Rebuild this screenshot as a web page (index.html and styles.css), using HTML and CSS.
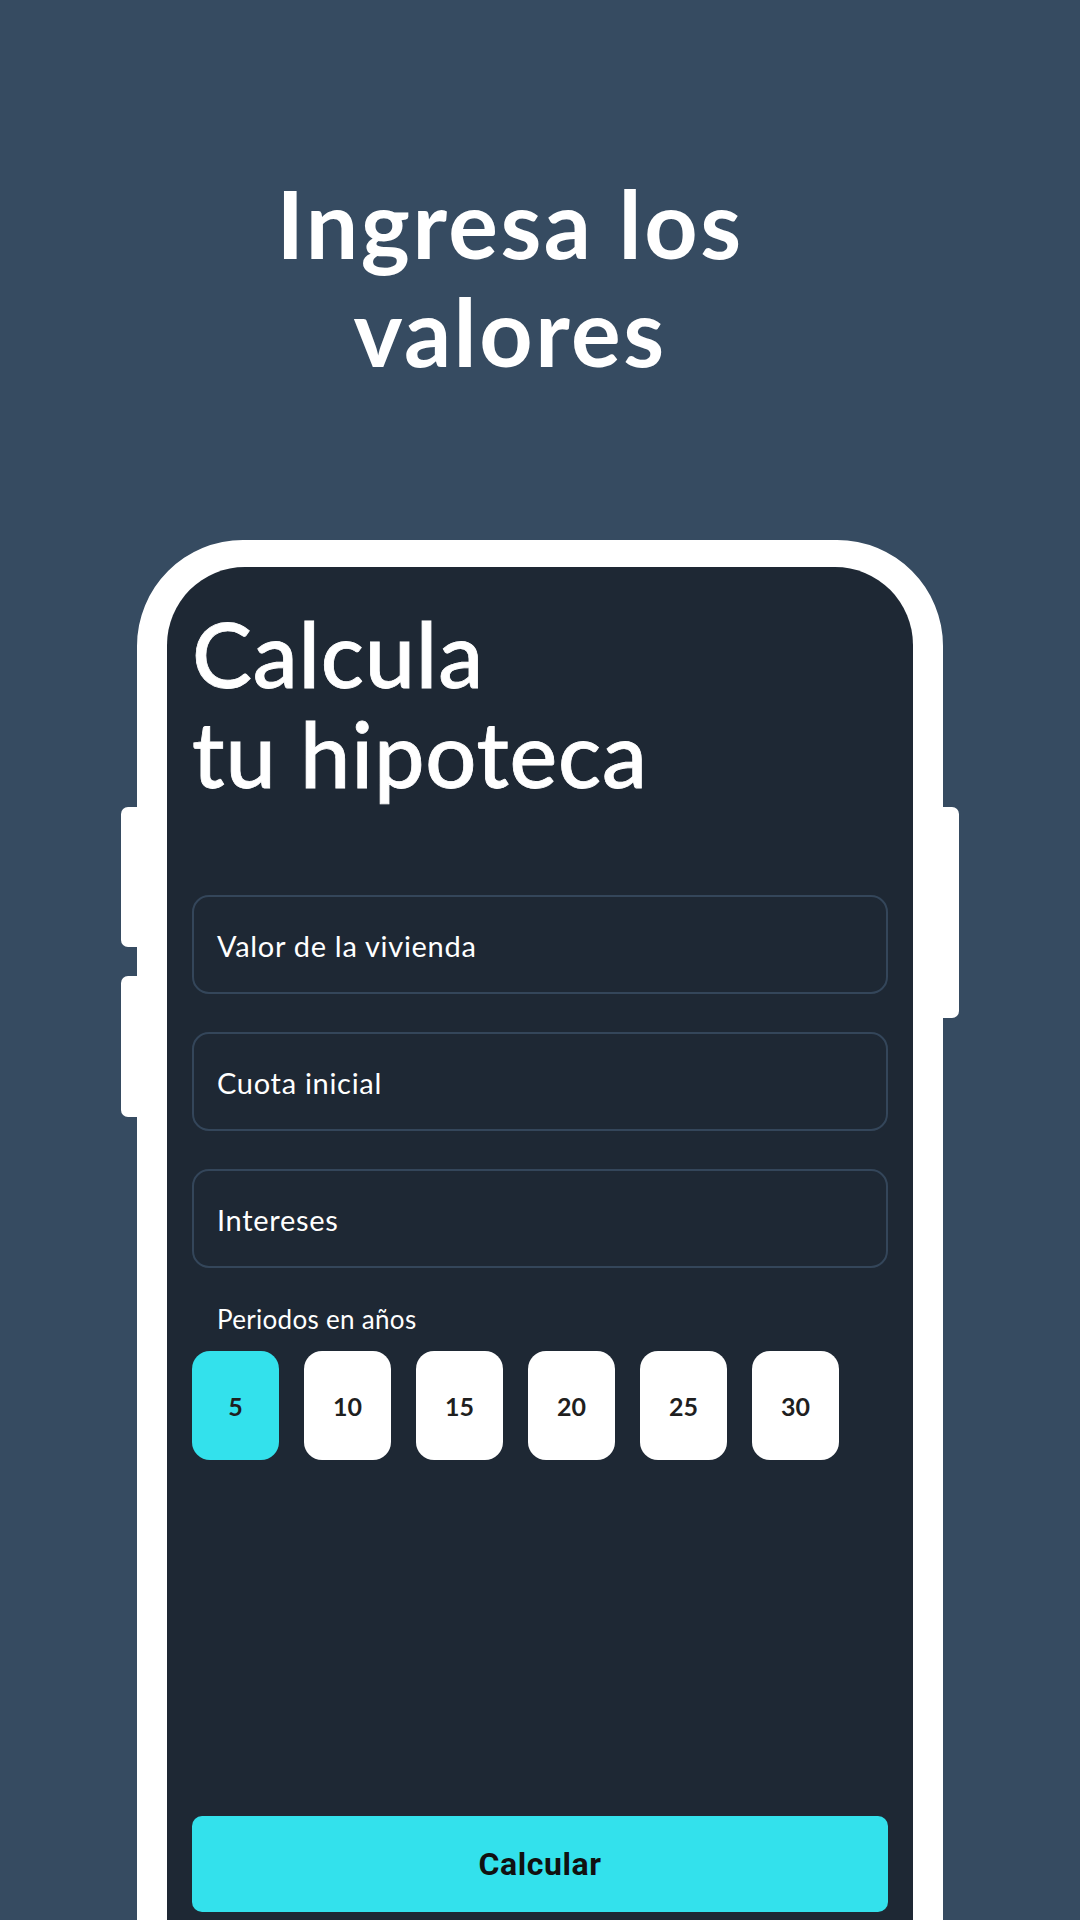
FILE: index.html
```html
<!DOCTYPE html>
<html lang="es">
<head>
<meta charset="utf-8">
<title>Calcula tu hipoteca</title>
<link rel="stylesheet" href="styles.css">
</head>
<body>
<div class="page">
  <h1 class="headline">Ingresa los<br>valores</h1>
  <div class="phone">
    <span class="side-btn left one"></span>
    <span class="side-btn left two"></span>
    <span class="side-btn right three"></span>
    <div class="screen">
      <h2 class="app-title">Calcula<br>tu hipoteca</h2>
      <div class="fields">
        <div class="field">Valor de la vivienda</div>
        <div class="field">Cuota inicial</div>
        <div class="field">Intereses</div>
      </div>
      <div class="periods-label">Periodos en años</div>
      <div class="chips">
        <div class="chip active">5</div>
        <div class="chip">10</div>
        <div class="chip">15</div>
        <div class="chip">20</div>
        <div class="chip">25</div>
        <div class="chip">30</div>
      </div>
      <div class="calc-btn">Calcular</div>
    </div>
  </div>
</div>
</body>
</html>
```

FILE: styles.css
```css
* { box-sizing: border-box; }
html, body {
  margin: 0;
  padding: 0;
}
body {
  width: 1080px;
  height: 1920px;
  overflow: hidden;
  background: #364b61;
  font-family: "Lato", "Liberation Sans", sans-serif;
}
.page {
  width: 1080px;
  height: 1920px;
  display: flex;
  flex-direction: column;
  align-items: center;
}
.headline {
  margin: 169px 60px 0 0;
  color: #ffffff;
  font-size: 93px;
  line-height: 108px;
  font-weight: 700;
  text-align: center;
  letter-spacing: 2.5px;
}
.phone {
  position: relative;
  margin-top: 155px;
  width: 806px;
  height: 1500px;
  border: 30px solid #ffffff;
  border-top-width: 27px;
  border-radius: 106px 106px 0 0;
  background: #ffffff;
  flex-shrink: 0;
}
.side-btn {
  position: absolute;
  background: #ffffff;
  width: 16px;
}
.side-btn.left { left: -46px; border-radius: 7px 0 0 7px; }
.side-btn.right { right: -46px; border-radius: 0 7px 7px 0; }
.side-btn.one { top: 240px; height: 140px; }
.side-btn.two { top: 409px; height: 141px; }
.side-btn.three { top: 240px; height: 211px; }
.screen {
  height: 100%;
  background: #1e2834;
  border-radius: 78px 78px 0 0;
  padding: 36px 25px 0 25px;
  display: flex;
  flex-direction: column;
}
.app-title {
  margin: 0;
  color: #ffffff;
  font-size: 90px;
  line-height: 100px;
  font-weight: 500;
  letter-spacing: 0.8px;
  -webkit-text-stroke: 0.8px #ffffff;
}
.fields {
  margin-top: 92px;
  display: flex;
  flex-direction: column;
  gap: 38px;
}
.field {
  height: 99px;
  border: 2px solid #34465a;
  border-radius: 17px;
  display: flex;
  align-items: center;
  padding-left: 23px;
  padding-top: 2px;
  color: #ffffff;
  font-size: 29px;
  letter-spacing: 0.7px;
}
.periods-label {
  margin-top: 36px;
  padding-left: 25px;
  color: #ffffff;
  font-size: 26px;
  line-height: 30px;
  letter-spacing: 0.3px;
}
.chips {
  margin-top: 17px;
  display: flex;
  gap: 25px;
}
.chip {
  width: 87px;
  height: 109px;
  border-radius: 18px;
  background: #ffffff;
  color: #1f1f1f;
  display: flex;
  align-items: center;
  justify-content: center;
  font-size: 25px;
  font-weight: 700;
}
.chip.active {
  background: #33e1ec;
}
.calc-btn {
  margin-top: 356px;
  height: 96px;
  border-radius: 10px;
  background: #33e1ec;
  color: #111111;
  display: flex;
  align-items: center;
  justify-content: center;
  font-family: "Roboto", "Liberation Sans", sans-serif;
  font-weight: 700;
  font-size: 32px;
  letter-spacing: 0.6px;
  flex-shrink: 0;
}
```
